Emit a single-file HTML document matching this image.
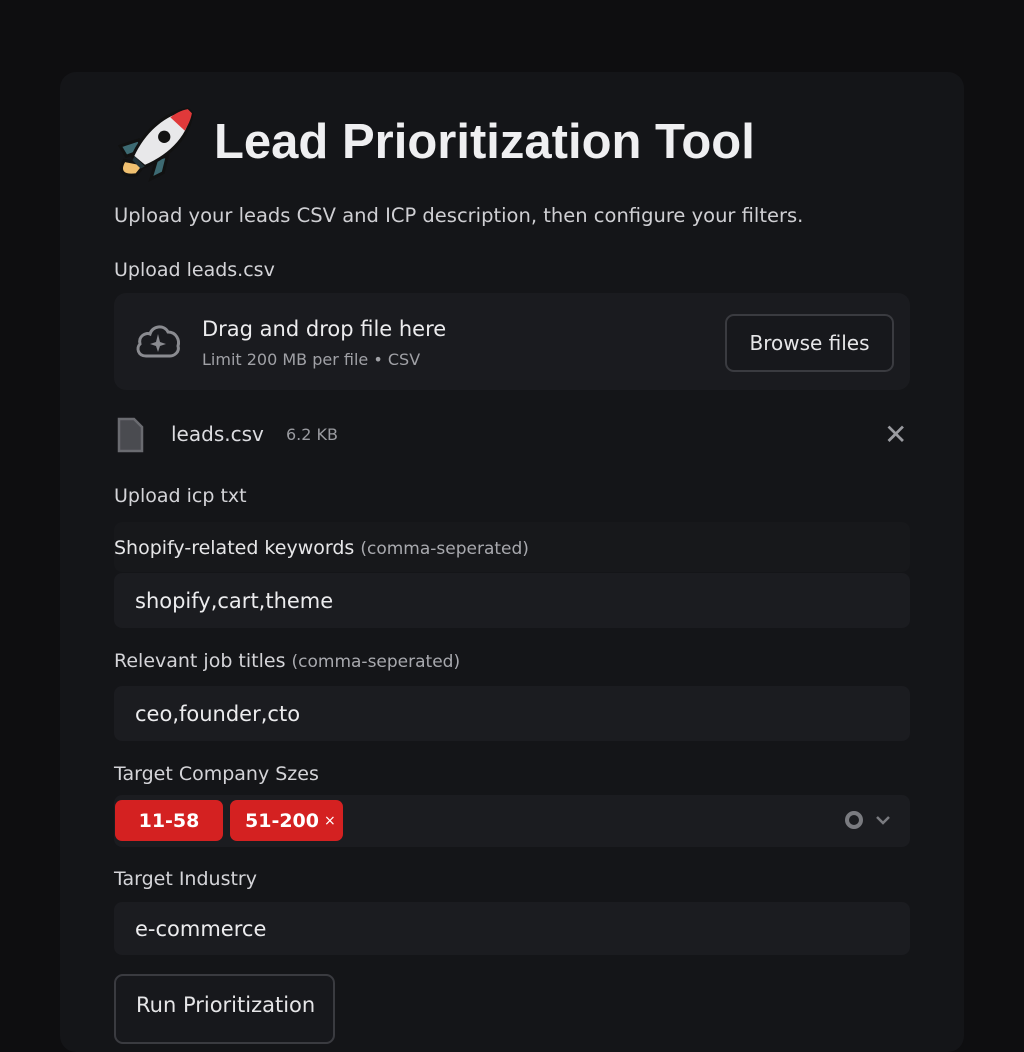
<!DOCTYPE html>
<html><head><meta charset="utf-8"><style>
*{box-sizing:border-box;margin:0;padding:0}
body{width:1024px;height:1024px;background:#0e0e10;font-family:"DejaVu Sans","Liberation Sans",sans-serif;color:#e6e6e8;position:relative;overflow:hidden}
.card{position:absolute;left:60px;top:72px;width:904px;height:980px;background:#141518;border-radius:16px}
.a{position:absolute}
.lbl{font-size:19px;color:#d4d4d8}
.box{background:#1b1c20;border-radius:8px}
.in{font-size:21px;color:#ececee;padding-left:21px;display:flex;align-items:center}
</style></head><body>
<div class="card"></div>
<svg class="a" style="left:114px;top:104px" width="82" height="80" viewBox="0 0 80 76">
<path d="M24 34 L6 40 L12 50 L28 44Z" fill="#3d6a72" stroke="#111" stroke-width="3"/>
<path d="M42 52 L36 72 L48 66 L52 50Z" fill="#3d6a72" stroke="#111" stroke-width="3"/>
<path d="M10 54 C4 64 8 70 22 68 L30 58Z" fill="#f0c070" stroke="#111" stroke-width="3"/>
<path d="M72 4 C50 8 30 24 18 50 L30 60 C58 48 74 28 76 8Z" fill="#e8e8ea" stroke="#111" stroke-width="3"/>
<path d="M72 4 C66 5 60 8 55 12 L69 25 C72 20 75 14 76 8Z" fill="#e0393a"/>
<circle cx="49" cy="31" r="6" fill="#111"/>
<path d="M20 50 L30 60 L26 62 L18 54Z" fill="#22333a"/>
</svg>
<div class="a" style="left:214px;top:114px;font-family:'Liberation Sans',sans-serif;font-size:49px;font-weight:bold;color:#efeff1">Lead Prioritization Tool</div>
<div class="a" style="left:114px;top:204px;font-size:19.5px;color:#cfcfd3">Upload your leads CSV and ICP description, then configure your filters.</div>
<div class="a lbl" style="left:114px;top:259px">Upload leads.csv</div>
<div class="a box" style="left:114px;top:293px;width:796px;height:97px;border-radius:12px;background:#1a1b1f"></div>
<svg class="a" style="left:134px;top:322px" width="48" height="38" viewBox="0 0 48 38"><path d="M12 34 C4 34 2 26 6 22 C4 14 12 10 16 12 C18 4 30 2 34 10 C42 10 46 18 44 24 C46 30 40 34 36 34Z" fill="none" stroke="#8a8b90" stroke-width="3"/><path d="M24 12 L26 20 L32 22 L26 24 L24 30 L22 24 L16 22 L22 20Z" fill="#8a8b90"/></svg>
<div class="a" style="left:202px;top:317px;font-size:21px;color:#ececee">Drag and drop file here</div>
<div class="a" style="left:202px;top:350px;font-size:16px;color:#a0a1a6">Limit 200 MB per file • CSV</div>
<div class="a" style="left:725px;top:314px;width:169px;height:58px;border:2px solid #3a3b40;border-radius:9px;background:#17181c;font-size:20px;display:flex;align-items:center;justify-content:center">Browse files</div>
<svg class="a" style="left:116px;top:416px" width="30" height="38" viewBox="0 0 30 38"><path d="M3 3 H18 L26 11 V35 H3Z" fill="#4a4b50" stroke="#6a6b70" stroke-width="2.5"/></svg>
<div class="a" style="left:171px;top:422px;font-size:20px;color:#dcdce0">leads.csv</div>
<div class="a" style="left:286px;top:425px;font-size:16px;color:#9a9ba0">6.2 KB</div>
<div class="a" style="left:884px;top:418px;font-size:28px;color:#9a9ba0">✕</div>
<div class="a lbl" style="left:114px;top:485px">Upload icp txt</div>
<div class="a" style="left:114px;top:522px;width:796px;height:50px;background:#17181b;border-radius:8px"></div>
<div class="a lbl" style="left:114px;top:537px;color:#e6e6e8">Shopify-related keywords <span style="color:#a8a9ae;font-size:17px">(comma-seperated)</span></div>
<div class="a box in" style="left:114px;top:573px;width:796px;height:55px">shopify,cart,theme</div>
<div class="a lbl" style="left:114px;top:650px">Relevant job titles <span style="color:#a8a9ae;font-size:17px">(comma-seperated)</span></div>
<div class="a box in" style="left:114px;top:686px;width:796px;height:55px">ceo,founder,cto</div>
<div class="a lbl" style="left:114px;top:763px">Target Company Szes</div>
<div class="a box" style="left:114px;top:795px;width:796px;height:52px"></div>
<div class="a" style="left:115px;top:800px;width:108px;height:41px;background:#d42121;border-radius:7px;font-size:19px;font-weight:bold;color:#fff;display:flex;align-items:center;justify-content:center">11-58</div>
<div class="a" style="left:230px;top:800px;width:113px;height:41px;background:#d42121;border-radius:7px;font-size:19px;font-weight:bold;color:#fff;display:flex;align-items:center;padding-left:15px">51-200 <span style="font-weight:normal;font-size:14px;margin-left:5px">×</span></div>
<div class="a" style="left:845px;top:811px;width:18px;height:18px;border:4px solid #7a7b80;border-radius:50%"></div>
<svg class="a" style="left:875px;top:814px" width="16" height="12"><path d="M2 3 L8 9 L14 3" fill="none" stroke="#7a7b80" stroke-width="2.5"/></svg>
<div class="a lbl" style="left:114px;top:868px">Target Industry</div>
<div class="a box in" style="left:114px;top:902px;width:796px;height:53px">e-commerce</div>
<div class="a" style="left:114px;top:974px;width:221px;height:70px;border:2px solid #3a3b40;border-radius:9px;background:#17181c;font-size:21px;padding:17px 0 0 20px">Run Prioritization</div>
</body></html>
